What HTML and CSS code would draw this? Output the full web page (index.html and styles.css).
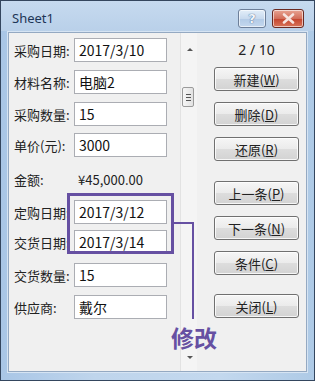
FILE: index.html
```html
<!DOCTYPE html>
<html lang="zh-CN">
<head>
    <meta charset="UTF-8">
    <title>Sheet1</title>
    <link rel="stylesheet" href="styles.css">
</head>
<body>
    <div class="window">
        <!-- Barra de titulo -->
        <div class="titlebar">
            <span class="title">Sheet1</span>
            <div class="caption-btns">
                <div class="cap-btn help">?</div>
                <div class="cap-btn close">
                    <svg width="13" height="11" viewBox="0 0 13 11"><path d="M2 1.5 L11 9.5 M11 1.5 L2 9.5" stroke="#f6e4e0" stroke-width="2.6" stroke-linecap="round"/></svg>
                </div>
            </div>
        </div>

        <div class="client">
            <!-- Campos del registro -->
            <div class="fields">
                <div class="row r1"><label>采购日期:</label><div class="box">2017/3/10</div></div>
                <div class="row r2"><label>材料名称:</label><div class="box">电脑2</div></div>
                <div class="row r3"><label>采购数量:</label><div class="box">15</div></div>
                <div class="row r4"><label>单价(元):</label><div class="box">3000</div></div>
                <div class="row r5"><label>金额:</label><div class="value">¥45,000.00</div></div>
                <div class="row r6"><label>定购日期:</label><div class="box">2017/3/12</div></div>
                <div class="row r7"><label>交货日期:</label><div class="box">2017/3/14</div></div>
                <div class="row r8"><label>交货数量:</label><div class="box">15</div></div>
                <div class="row r9"><label>供应商:</label><div class="box">戴尔</div></div>
            </div>

            <!-- Barra de desplazamiento -->
            <div class="scroll">
                <div class="arrow up"></div>
                <div class="thumb"><span></span><span></span><span></span></div>
                <div class="arrow down"></div>
            </div>

            <!-- Botones -->
            <div class="actions">
                <div class="counter">2 / 10</div>
                <button class="b1">新建(<u>W</u>)</button>
                <button class="b2">删除(<u>D</u>)</button>
                <button class="b3">还原(<u>R</u>)</button>
                <button class="b4">上一条(<u>P</u>)</button>
                <button class="b5">下一条(<u>N</u>)</button>
                <button class="b6">条件(<u>C</u>)</button>
                <button class="b7">关闭(<u>L</u>)</button>
            </div>
        </div>

        <!-- Anotacion -->
        <div class="mark-box"></div>
        <div class="mark-h"></div>
        <div class="mark-v"></div>
        <div class="mark-text">修改</div>
    </div>
</body>
</html>
```

FILE: styles.css
```css
/* Ventana */
body {
    margin: 0;
    background: #ffffff;
    font-family: "Noto Sans CJK SC", "Noto Sans", sans-serif;
}

.window {
    width: 315px;
    height: 381px;
    box-sizing: border-box;
    border: 1px solid #34465e;
    background: linear-gradient(90deg, #a9c6e6, #bfd5ec 30%, #c3d8ee 70%, #aecae6);
    position: relative;
    display: flex;
    flex-direction: column;
}

.titlebar {
    height: 30px;
    display: flex;
    align-items: center;
    justify-content: space-between;
    padding: 0 10px 0 11px;
    background: linear-gradient(#c6daef, #b9d0e9);
}

.title {
    font-family: "Noto Sans", sans-serif;
    font-size: 13px;
    color: #1d3556;
    margin-top: 4px;
}

.caption-btns {
    display: flex;
    gap: 6px;
    margin-top: 5px;
}

.cap-btn {
    height: 17px;
    border: 1px solid #6d7f99;
    border-radius: 3px;
    display: flex;
    align-items: center;
    justify-content: center;
    box-shadow: inset 0 0 0 1px rgba(255, 255, 255, 0.6);
}

.help {
    width: 26px;
    background: linear-gradient(#e3eef9, #c8daee 50%, #b2cae6 51%, #c4d8ee);
    color: #f2f6fb;
    font-family: "DejaVu Sans", sans-serif;
    font-weight: bold;
    font-size: 13px;
    text-shadow: 0 0 1px #4d6c94, 0 0 1px #4d6c94;
}

.close {
    width: 30px;
    border-color: #6b2a22;
    background: linear-gradient(#e8a493, #d26e5a 50%, #c4432d 51%, #d8745a);
}

.client {
    flex: 1;
    margin: 1px 7px 8px 7px;
    background: #f0f0f0;
    border: 1px solid #94a9c2;
    display: flex;
    box-shadow: 0 0 0 1px #d6e4f3;
}

/* Campos */
.fields {
    width: 163px;
    padding: 0 0 0 5px;
}

.row {
    display: flex;
    align-items: center;
    height: 24px;
    margin-top: 8px;
}

.r1 { margin-top: 5px; }
.r3 { margin-top: 8px; }
.r4 { margin-top: 7px; }
.r5 { margin-top: 8px; height: 29px; }
.r6 { margin-top: 6px; }
.r7 { margin-top: 6px; }
.r8 { margin-top: 9px; }
.r9 { margin-top: 8px; }

label {
    width: 60px;
    font-size: 13px;
    color: #222;
    white-space: nowrap;
}

.box {
    width: 93px;
    flex-shrink: 0;
    height: 24px;
    box-sizing: border-box;
    border: 1px solid #abadb3;
    background: #fff;
    font-size: 14px;
    color: #111;
    padding-left: 4px;
    line-height: 22px;
}

.value {
    font-size: 13px;
    color: #222;
    padding-left: 4px;
    white-space: nowrap;
}

/* Scroll */
.scroll {
    width: 16px;
    margin-left: 3px;
    border-left: 1px solid #e2e2e2;
    background: #f4f4f4;
    position: relative;
}

.arrow {
    position: absolute;
    left: 6px;
    width: 0;
    height: 0;
    border-left: 3px solid transparent;
    border-right: 3px solid transparent;
}

.arrow.up {
    top: 15px;
    border-bottom: 3px solid #555;
}

.arrow.down {
    bottom: 12px;
    border-top: 3px solid #555;
}

.thumb {
    position: absolute;
    top: 54px;
    left: 1px;
    width: 10px;
    height: 18px;
    border: 1px solid #9b9b9b;
    border-radius: 2px;
    background: linear-gradient(90deg, #f6f6f6, #e2e2e2);
    display: flex;
    flex-direction: column;
    justify-content: center;
    align-items: center;
    gap: 2px;
}

.thumb span {
    width: 5px;
    height: 1px;
    background: #555;
}

/* Botones */
.actions {
    flex: 1;
    display: flex;
    flex-direction: column;
    align-items: flex-end;
    padding-right: 7px;
}

.counter {
    width: 85px;
    text-align: center;
    font-family: "Noto Sans", sans-serif;
    font-size: 14px;
    color: #222;
    margin-top: 7px;
    height: 20px;
}

button {
    width: 85px;
    height: 24px;
    border: 1px solid #707070;
    border-radius: 3px;
    background: linear-gradient(#f6f6f6, #ebebeb 50%, #dddddd 51%, #d3d3d3);
    box-shadow: inset 0 0 0 1px rgba(255, 255, 255, 0.8);
    font-family: "Noto Sans CJK SC", sans-serif;
    font-size: 13px;
    color: #222;
    padding: 0;
}

.b1 { margin-top: 7px; }
.b2 { margin-top: 11px; }
.b3 { margin-top: 11px; }
.b4 { margin-top: 20px; }
.b5 { margin-top: 11px; }
.b6 { margin-top: 11px; }
.b7 { margin-top: 19px; }

/* Anotacion */
.mark-box {
    position: absolute;
    left: 66px;
    top: 192px;
    width: 101px;
    height: 55px;
    border: 3px solid #6650a2;
}

.mark-h {
    position: absolute;
    left: 172px;
    top: 221px;
    width: 21px;
    height: 2px;
    background: #6650a2;
}

.mark-v {
    position: absolute;
    left: 191px;
    top: 221px;
    width: 2px;
    height: 97px;
    background: #6650a2;
}

.mark-text {
    position: absolute;
    left: 170px;
    top: 322px;
    font-size: 23px;
    font-weight: bold;
    color: #6650a2;
    line-height: 28px;
}
```
